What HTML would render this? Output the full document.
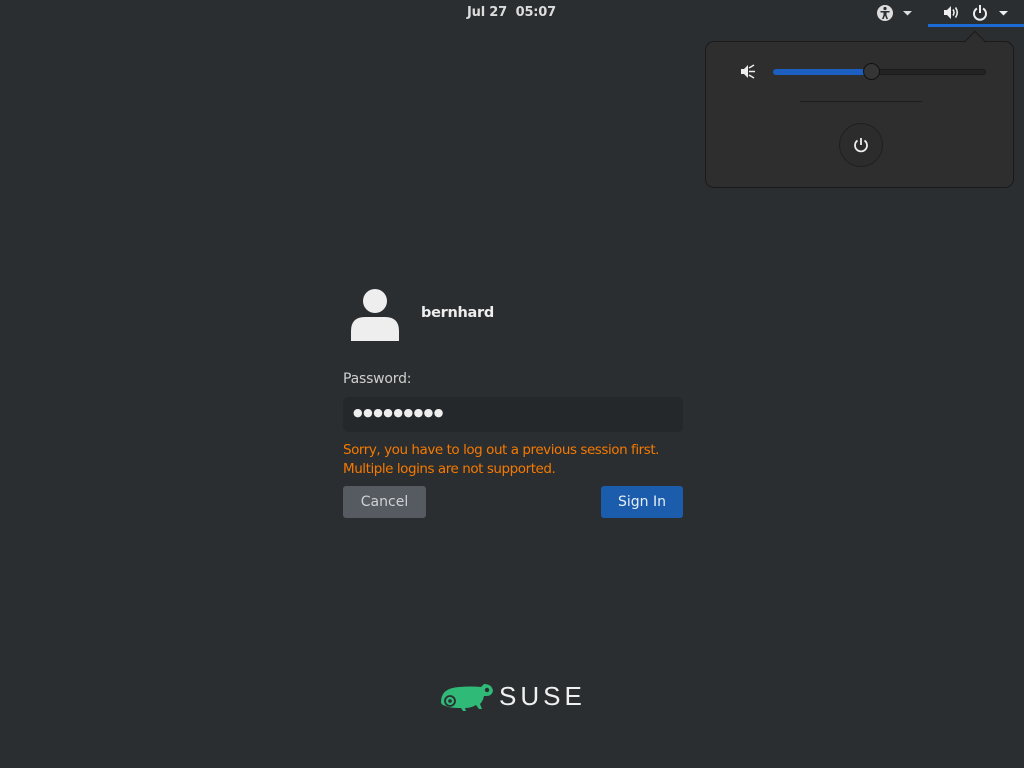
<!DOCTYPE html>
<html><head><meta charset="utf-8"><style>
*{margin:0;padding:0;box-sizing:border-box}
body{width:1024px;height:768px;background:#2b2e30;font-family:"DejaVu Sans","Liberation Sans",sans-serif;color:#eee;position:relative;overflow:hidden}
.abs{position:absolute}
</style></head><body>
<div class="abs" style="left:467px;top:5px;font-size:13px;font-weight:bold;color:#dcdcdc;letter-spacing:-0.2px">Jul 27&nbsp; 05:07</div>
<svg class="abs" style="left:876px;top:4px" width="40" height="18" viewBox="0 0 40 18">
<circle cx="9" cy="9" r="8" fill="#ddd"/><circle cx="9" cy="4.5" r="1.6" fill="#2b2e30"/>
<path d="M4.5 7h9v1.5h-3v2.5l1.5 4h-1.6l-1.4-3.5-1.4 3.5H6l1.5-4V8.5h-3z" fill="#2b2e30"/>
<path d="M27 7h9l-4.5 4.5z" fill="#ddd"/></svg>
<svg class="abs" style="left:940px;top:3px" width="75" height="20" viewBox="0 0 75 20">
<path d="M4 7h3l4-4v13l-4-4H4z" fill="#eee"/><path d="M13 6.5q2 3 0 6M15.5 4.5q3.5 5 0 10" stroke="#eee" stroke-width="1.6" fill="none"/>
<path d="M37 5.5a6 6 0 1 0 6 0" stroke="#eee" stroke-width="2" fill="none"/><path d="M40 2v8" stroke="#eee" stroke-width="2"/>
<path d="M59 8h9l-4.5 4.5z" fill="#eee"/></svg>
<div class="abs" style="left:928px;top:24px;width:96px;height:3px;background:#1c6ad3"></div>
<div class="abs" style="left:705px;top:41px;width:309px;height:147px;background:#2e2e2e;border:1px solid #1a1a1a;border-radius:9px"></div>
<div class="abs" style="left:967px;top:34px;width:16px;height:16px;background:#2e2e2e;border-left:1px solid #1a1a1a;border-top:1px solid #1a1a1a;transform:rotate(45deg)"></div>
<svg class="abs" style="left:739px;top:62px" width="18" height="20" viewBox="0 0 18 20"><path d="M2 7h3l4-4v13l-4-4H2z" fill="#eee"/><path d="M10 9.5h6M10 6l5-3M10 13l5 3" stroke="#eee" stroke-width="1.5"/></svg>
<div class="abs" style="left:773px;top:69px;width:213px;height:6px;background:#232323;border:1px solid #1a1a1a;border-radius:3px"></div>
<div class="abs" style="left:773px;top:69px;width:100px;height:6px;background:#1c5fc0;border-radius:3px"></div>
<div class="abs" style="left:863px;top:63px;width:17px;height:17px;border-radius:50%;background:#353535;border:1px solid #111"></div>
<div class="abs" style="left:800px;top:101px;width:122px;height:1px;background:#1c1c1c"></div>
<div class="abs" style="left:839px;top:123px;width:44px;height:44px;border-radius:50%;background:#2c2c2c;border:1px solid #1f1f1f"></div>
<svg class="abs" style="left:851px;top:135px" width="20" height="20" viewBox="0 0 20 20"><path d="M6.5 5.5a6 6 0 1 0 7 0" stroke="#eee" stroke-width="1.8" fill="none"/><path d="M10 3v7" stroke="#eee" stroke-width="1.8"/></svg>
<svg class="abs" style="left:350px;top:289px" width="50" height="52" viewBox="0 0 50 52"><circle cx="25" cy="12" r="12" fill="#eee"/><path d="M1 52v-10q0-14 14-14h20q14 0 14 14v10z" fill="#eee"/></svg>
<div class="abs" style="left:421px;top:305px;font-size:14.5px;font-weight:bold;color:#eee;letter-spacing:-0.3px">bernhard</div>
<div class="abs" style="left:343px;top:371px;font-size:14px;color:#cfcfcf;letter-spacing:-0.2px">Password:</div>
<div class="abs" style="left:343px;top:397px;width:340px;height:35px;background:#25282a;border-radius:5px"></div>
<div class="abs" style="left:353px;top:406px;font-size:11px;letter-spacing:0.5px;color:#eee">●●●●●●●●●</div>
<div class="abs" style="left:343px;top:441px;font-size:13.5px;line-height:19px;color:#f57900;letter-spacing:-0.45px">Sorry, you have to log out a previous session first.<br>Multiple logins are not supported.</div>
<div class="abs" style="left:343px;top:486px;width:83px;height:32px;background:#555b61;border-radius:3px;color:#cfd2d4;font-size:14px;text-align:center;line-height:32px">Cancel</div>
<div class="abs" style="left:601px;top:486px;width:82px;height:32px;background:#1b5dac;border-radius:3px;color:#e6eef8;font-size:14px;text-align:center;line-height:32px">Sign In</div>
<svg class="abs" style="left:440px;top:682px" width="54" height="30" viewBox="0 0 54 30">
<path d="M1 20q0-14 18-15q12-1 22 0l3-3q8 0 9 7q-1 5-7 5h-2q-1 5-4 8l2 5h-3l-3-4q-5 3-11 3l1 3h-3l-2-3q-12 0-15-2q-5-1-5-4z" fill="#30ba78"/>
<circle cx="10" cy="19" r="5" fill="none" stroke="#2b2e30" stroke-width="1.8"/><circle cx="10" cy="19" r="1.8" fill="#2b2e30"/>
<circle cx="47" cy="8" r="2.2" fill="#2b2e30"/></svg>
<div class="abs" style="left:499px;top:681px;font-size:26px;letter-spacing:4px;color:#f0f0f0;font-family:'Liberation Sans',sans-serif">SUSE</div>
</body></html>
